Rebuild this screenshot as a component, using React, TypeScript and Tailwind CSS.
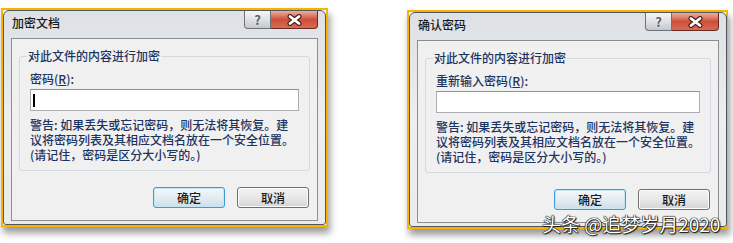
import React from 'react';

type DialogProps = {
  frame: string;
  title: string;
  label: React.ReactNode;
  cursor?: boolean;
};

const WARNING = [
  '警告: 如果丢失或忘记密码，则无法将其恢复。建',
  '议将密码列表及其相应文档名放在一个安全位置。',
  '(请记住，密码是区分大小写的。)',
];

function CloseGlyph() {
  return (
    <svg width="17" height="12" viewBox="0 0 17 12">
      <path d="M4 2.5 L13 9.5 M13 2.5 L4 9.5" stroke="#4a1f18" strokeWidth="5" strokeLinecap="round" fill="none" />
      <path d="M4 2.5 L13 9.5 M13 2.5 L4 9.5" stroke="#ffffff" strokeWidth="2.8" strokeLinecap="round" fill="none" />
    </svg>
  );
}

function Dialog({ frame, title, label, cursor }: DialogProps) {
  return (
    <div className={`${frame} flex border-2 border-[#f6b400] bg-white shadow-[2px_6px_7px_rgba(0,0,0,0.4)]`}>
      <div className="flex flex-1 flex-col rounded-t-[6px] rounded-b-[3px] border border-[#50565c] bg-gradient-to-b from-[#dde1e5] via-[#eceef0] to-[#e9ebed] px-[7px] pb-[3px]">
        {/* 标题栏 */}
        <div className="flex h-[27px] items-start justify-between">
          <span className="pl-[1px] pt-[5px] text-[12px] leading-[14px] text-[#1a1a1a] [font-weight:500]">{title}</span>
          <div className="flex">
            <div className="flex h-[18px] w-[27px] items-center justify-center rounded-bl-[4px] border border-t-0 border-[#6d7278] bg-gradient-to-b from-[#f4f5f6] via-[#dfe1e4] to-[#c4c8cc] text-[13px] font-bold leading-none text-[#5a6066] [text-shadow:0_0_2px_#fff]">
              ?
            </div>
            <div className="flex h-[18px] w-[47px] items-center justify-center rounded-br-[4px] border border-l-0 border-t-0 border-[#6a2b22] bg-gradient-to-b from-[#eab0a2] via-[#cd4f39] to-[#d86a52]">
              <CloseGlyph />
            </div>
          </div>
        </div>

        {/* 客户区 */}
        <div className="flex flex-1 flex-col border border-[#8c8e92] bg-[#f0f0f0] px-[7px] pt-[17px]">
          <div className="relative rounded-[3px] border border-[#d3dbe1] px-[10px] pb-[8px] pt-[15px] text-[12px] leading-[14px] text-[#1c3461] [font-weight:500]">
            <span className="absolute left-[7px] top-[-8px] bg-[#f0f0f0] px-[1px]">对此文件的内容进行加密</span>
            <div className="whitespace-nowrap">{label}</div>
            <div className="mt-[3px] flex h-[22px] items-center border border-[#abadb3] border-t-[#8e9096] bg-white pl-[2px]">
              {cursor && <span className="block h-[13px] w-[2px] bg-black" />}
            </div>
            <div className="mt-[6px] whitespace-nowrap leading-[15px]">
              {WARNING.map((line, i) => (
                <div key={i}>{line}</div>
              ))}
            </div>
          </div>

          <div className="mt-[16px] flex justify-end gap-[12px] pr-[1px] text-[12px] text-[#1a1a1a] [font-weight:500]">
            <button className="flex h-[21px] w-[72px] items-center justify-center rounded-[3px] border border-[#3c9ad6] bg-gradient-to-b from-[#f4f8fb] via-[#e3ecf3] to-[#cfdde8] shadow-[inset_0_0_0_1px_#c5e6f7]">
              确定
            </button>
            <button className="flex h-[21px] w-[72px] items-center justify-center rounded-[3px] border border-[#707070] bg-gradient-to-b from-[#f3f3f3] via-[#e8e8e8] to-[#d4d4d4] shadow-[inset_0_0_0_1px_#fbfbfb]">
              取消
            </button>
          </div>
        </div>
      </div>
    </div>
  );
}

export default function App() {
  return (
    <div className="relative flex h-[243px] w-[733px] items-start overflow-hidden bg-white font-['Noto_Sans_CJK_SC','Noto_Sans',sans-serif]">
      <Dialog
        frame="ml-[1px] mt-[8px] h-[219px] w-[327px]"
        title="加密文档"
        label={<>密码(<span className="underline">R</span>):</>}
        cursor
      />
      <Dialog
        frame="ml-[79px] mt-[10px] h-[219px] w-[321px]"
        title="确认密码"
        label={<>重新输入密码(<span className="underline">R</span>):</>}
      />

      {/* 水印 */}
      <span className="absolute left-[542px] top-[213px] whitespace-nowrap text-[19px] leading-[22px] text-white [text-shadow:0_0_1px_#000,0_0_1px_#000,0_0_1px_#000,1px_1px_1px_#222]">
        头条 @追梦岁月2020
      </span>
    </div>
  );
}
